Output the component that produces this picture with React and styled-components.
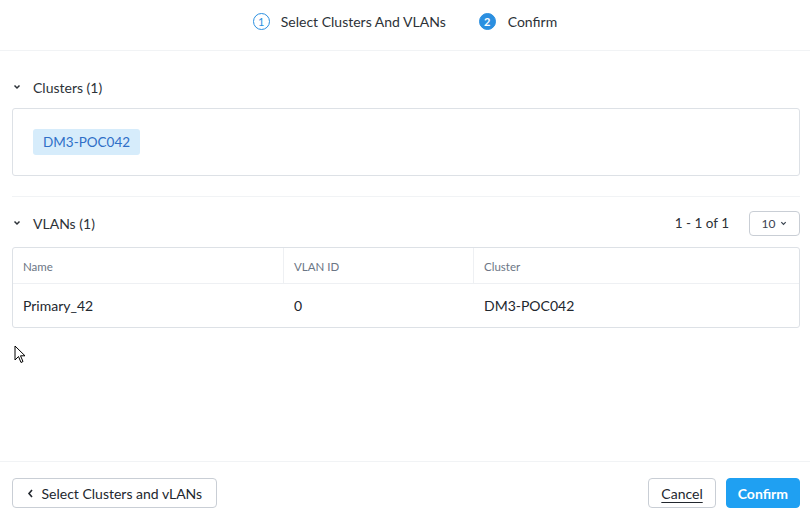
import React from "react";
import styled, { createGlobalStyle } from "styled-components";

const Global = createGlobalStyle`
  html, body { margin: 0; padding: 0; background: #fff; }
  body { font-family: Lato, "Open Sans", sans-serif; color: #22272e; }
  * { box-sizing: border-box; }
`;

const Page = styled.div`
  width: 810px;
  height: 516px;
  display: flex;
  flex-direction: column;
  position: relative;
  background: #fff;
`;

const Header = styled.div`
  height: 51px;
  border-bottom: 1px solid #f1f3f5;
  display: flex;
  justify-content: center;
  align-items: flex-start;
  padding-top: 12px;
  gap: 33px;
  padding-left: 0px;
`;

const Step = styled.div`
  display: flex;
  align-items: center;
  gap: ${(p) => p.$gap}px;
  font-size: 14px;
  color: #2d3238;
  height: 18px;
`;

const StepNum = styled.span`
  width: 17px;
  height: 17px;
  border-radius: 50%;
  display: inline-flex;
  align-items: center;
  justify-content: center;
  font-size: 11px;
  font-weight: ${(p) => (p.$active ? 700 : 400)};
  border: 1.3px solid #2b8fe0;
  background: ${(p) => (p.$active ? "#2b8fe0" : "#fff")};
  color: ${(p) => (p.$active ? "#fff" : "#2b8fe0")};
`;

const Body = styled.div`
  flex: 1;
  padding: 0 10px 0 12px;
  display: flex;
  flex-direction: column;
`;

const SectionHead = styled.div`
  display: flex;
  align-items: center;
  height: 24px;
  margin-top: ${(p) => p.$top}px;
  margin-bottom: ${(p) => p.$bottom}px;
`;

const SectionTitle = styled.div`
  display: flex;
  align-items: center;
  gap: 12px;
  font-size: 14px;
  color: #2d3238;
  flex: 1;
`;

const Chev = styled.svg`
  width: 8px;
  height: 8px;
  margin-left: 1px;
`;

const Box = styled.div`
  border: 1px solid #dde1e6;
  border-radius: 3px;
  height: 68px;
  padding: 20px 20px;
`;

const Tag = styled.span`
  display: inline-flex;
  align-items: center;
  height: 26px;
  padding: 0 10px;
  background: #d6ecfb;
  color: #2f6fc7;
  border-radius: 3px;
  font-size: 13.5px;
`;

const Divider = styled.div`
  height: 1px;
  background: #f1f3f5;
  margin-top: 20px;
`;

const Pager = styled.div`
  display: flex;
  align-items: center;
  gap: 20px;
  font-size: 13.5px;
  color: #2d3238;
`;

const PageSize = styled.button`
  all: unset;
  box-sizing: border-box;
  width: 51px;
  height: 25px;
  border: 1px solid #c9ced5;
  border-radius: 4px;
  display: inline-flex;
  align-items: center;
  justify-content: center;
  gap: 5px;
  font-family: inherit;
  font-size: 12px;
  color: #3a4450;
`;

const Table = styled.div`
  border: 1px solid #dde1e6;
  border-radius: 3px;
  display: grid;
  grid-template-columns: 270px 190px 1fr;
`;

const Th = styled.div`
  height: 36px;
  display: flex;
  align-items: center;
  padding-left: 10px;
  padding-top: 1px;
  font-size: 11.5px;
  color: #6c7685;
  border-bottom: 1px solid #eef0f3;
  border-left: ${(p) => (p.$first ? "none" : "1px solid #eef0f3")};
`;

const Td = styled.div`
  height: 43px;
  display: flex;
  align-items: center;
  padding-left: ${(p) => (p.$first ? 10 : 11)}px;
  font-size: 14px;
  color: #22272e;
`;

const Footer = styled.div`
  height: 55px;
  border-top: 1px solid #f1f3f5;
  display: flex;
  align-items: flex-start;
  padding: 16px 10px 0 12px;
  gap: 10px;
`;

const Button = styled.button`
  all: unset;
  box-sizing: border-box;
  height: 30px;
  padding: 0 ${(p) => p.$px}px;
  border-radius: 4px;
  display: inline-flex;
  align-items: center;
  gap: 8px;
  font-family: inherit;
  font-size: 14px;
  border: 1px solid ${(p) => (p.$primary ? "#1fa0f2" : "#c9ced5")};
  background: ${(p) => (p.$primary ? "#1fa0f2" : "#fff")};
  color: ${(p) => (p.$primary ? "#fff" : "#22272e")};
  font-weight: ${(p) => (p.$primary ? 700 : 400)};
  text-decoration: ${(p) => (p.$underline ? "underline" : "none")};
  text-underline-offset: 3px;
`;

const Spacer = styled.div`
  flex: 1;
`;

const Cursor = styled.svg`
  position: absolute;
  left: 14px;
  top: 345px;
  width: 13px;
  height: 19px;
`;

const Chevron = () => (
  <Chev viewBox="0 0 8 8">
    <path d="M1.5 2.5 L4 5 L6.5 2.5" fill="none" stroke="#2d3238" strokeWidth="1.5" />
  </Chev>
);

export default function App() {
  return (
    <Page>
      <Global />
      <Header>
        <Step $gap={11}>
          <StepNum>1</StepNum>
          Select Clusters And VLANs
        </Step>
        <Step $gap={12}>
          <StepNum $active>2</StepNum>
          Confirm
        </Step>
      </Header>
      <Body>
        <SectionHead $top={24} $bottom={9}>
          <SectionTitle>
            <Chevron />
            Clusters (1)
          </SectionTitle>
        </SectionHead>
        <Box>
          <Tag>DM3-POC042</Tag>
        </Box>
        <Divider />
        <SectionHead $top={14} $bottom={12}>
          <SectionTitle>
            <Chevron />
            VLANs (1)
          </SectionTitle>
          <Pager>
            1 - 1 of 1
            <PageSize>
              10
              <svg width="7" height="7" viewBox="0 0 8 8">
                <path d="M1.5 2.5 L4 5 L6.5 2.5" fill="none" stroke="#3a4450" strokeWidth="1.4" />
              </svg>
            </PageSize>
          </Pager>
        </SectionHead>
        <Table>
          <Th $first>Name</Th>
          <Th>VLAN ID</Th>
          <Th>Cluster</Th>
          <Td $first>Primary_42</Td>
          <Td>0</Td>
          <Td>DM3-POC042</Td>
        </Table>
      </Body>
      <Footer>
        <Button $px={13.5}>
          <svg width="7" height="9" viewBox="0 0 7 9">
            <path d="M5 1 L2 4.5 L5 8" fill="none" stroke="#22272e" strokeWidth="1.6" />
          </svg>
          Select Clusters and vLANs
        </Button>
        <Spacer />
        <Button $px={12} $underline>Cancel</Button>
        <Button $px={11} $primary>Confirm</Button>
      </Footer>
      <Cursor viewBox="0 0 13 19">
        <path
          d="M1 1 L1 15 L4.5 11.5 L7 17.5 L9 16.5 L6.5 10.8 L11 10.8 Z"
          fill="#fff"
          stroke="#000"
          strokeWidth="1"
          strokeLinejoin="round"
        />
      </Cursor>
    </Page>
  );
}
